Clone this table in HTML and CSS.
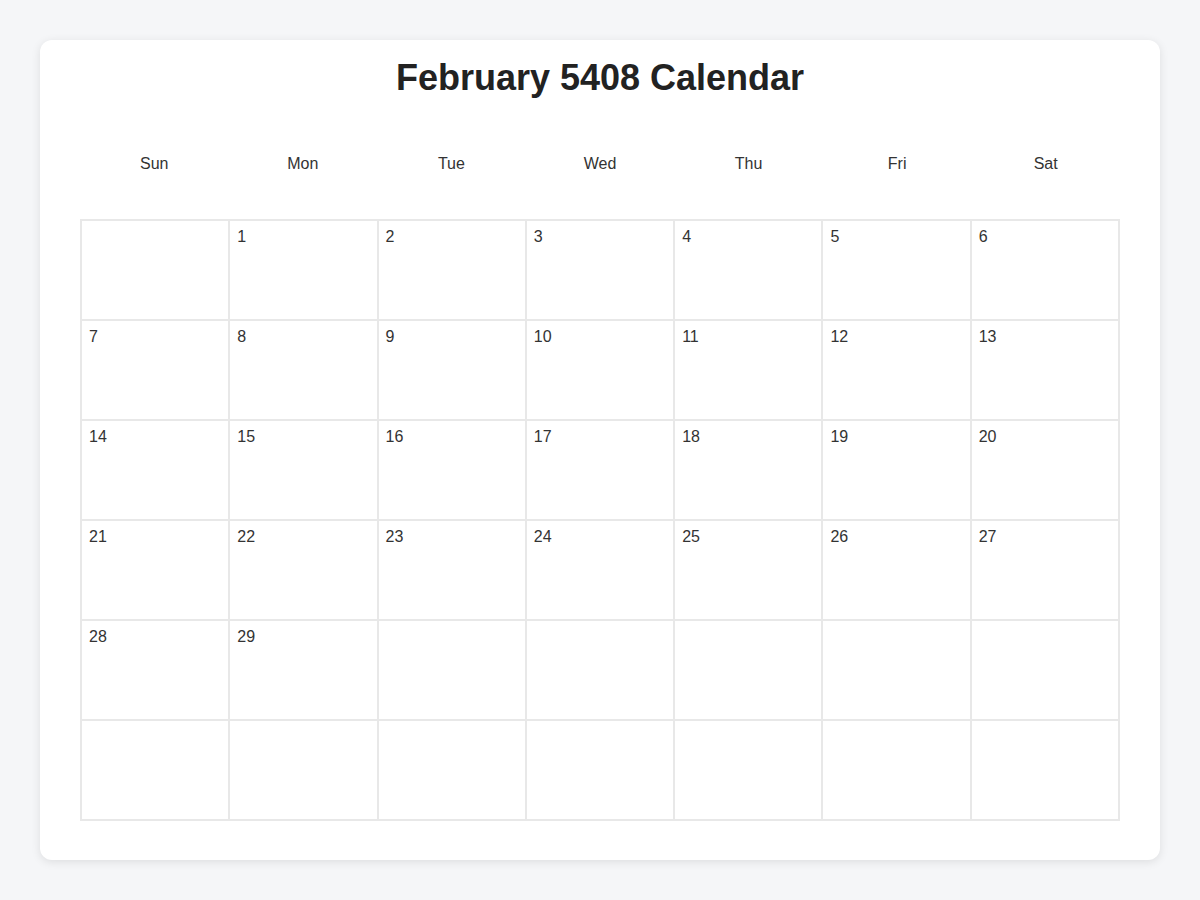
FILE: index.html
```html
<!DOCTYPE html>
<html>
<head>
<meta charset="utf-8">
<link rel="stylesheet" href="styles.css">
</head>
<body>
<div class="card">
  <h1 class="title">February 5408 Calendar</h1>
  <div class="weekdays">
    <div class="wd">Sun</div><div class="wd">Mon</div><div class="wd">Tue</div><div class="wd">Wed</div><div class="wd">Thu</div><div class="wd">Fri</div><div class="wd">Sat</div>
  </div>
  <div class="grid">
    <div class="cell"></div><div class="cell">1</div><div class="cell">2</div><div class="cell">3</div><div class="cell">4</div><div class="cell">5</div><div class="cell">6</div>
    <div class="cell">7</div><div class="cell">8</div><div class="cell">9</div><div class="cell">10</div><div class="cell">11</div><div class="cell">12</div><div class="cell">13</div>
    <div class="cell">14</div><div class="cell">15</div><div class="cell">16</div><div class="cell">17</div><div class="cell">18</div><div class="cell">19</div><div class="cell">20</div>
    <div class="cell">21</div><div class="cell">22</div><div class="cell">23</div><div class="cell">24</div><div class="cell">25</div><div class="cell">26</div><div class="cell">27</div>
    <div class="cell">28</div><div class="cell">29</div><div class="cell"></div><div class="cell"></div><div class="cell"></div><div class="cell"></div><div class="cell"></div>
    <div class="cell"></div><div class="cell"></div><div class="cell"></div><div class="cell"></div><div class="cell"></div><div class="cell"></div><div class="cell"></div>
  </div>
</div>
</body>
</html>
```
FILE: styles.css
```css
html, body {
  margin: 0;
  padding: 0;
}
* {
  box-sizing: border-box;
}
body {
  background: #f5f6f8;
  font-family: "Liberation Sans", Arial, sans-serif;
  color: #333;
  padding: 40px;
}
.card {
  background: #fff;
  border-radius: 12px;
  box-shadow: 0 2px 10px rgba(0, 0, 0, 0.1);
  padding: 16px 40px 39px;
}
.title {
  margin: 0;
  text-align: center;
  font-size: 36px;
  font-weight: bold;
  color: #222;
  line-height: 44px;
}
.weekdays {
  display: grid;
  grid-template-columns: repeat(7, 1fr);
  margin-top: 43px;
  margin-bottom: 34px;
}
.wd {
  text-align: center;
  font-size: 16px;
  padding: 12px 0;
  line-height: 18px;
}
.grid {
  display: grid;
  grid-template-columns: repeat(7, 1fr);
  border: 1px solid #e8e8e8;
}
.cell {
  height: 100px;
  border: 1px solid #e8e8e8;
  padding: 7px;
  font-size: 16px;
  line-height: 18px;
  color: #333;
}
```
